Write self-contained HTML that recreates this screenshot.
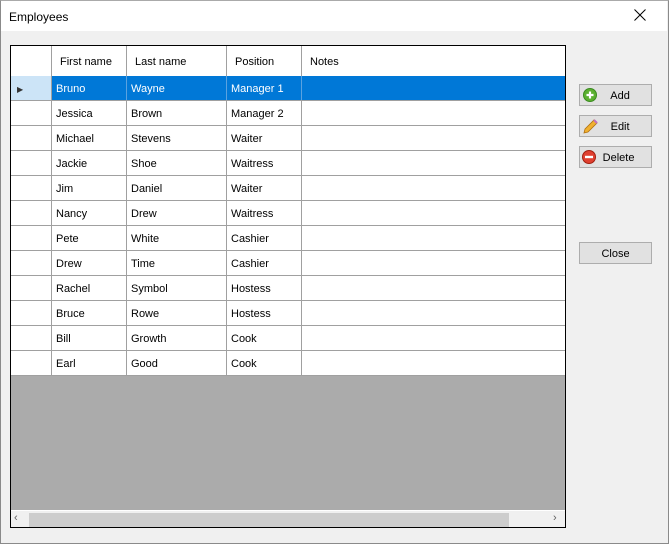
<!DOCTYPE html>
<html><head><style>
*{margin:0;padding:0;box-sizing:border-box}
body{width:669px;height:544px;background:#f0f0f0;font-family:"Liberation Sans",sans-serif;font-size:11px;color:#000;position:relative;overflow:hidden}
.win{position:absolute;left:0;top:0;width:669px;height:544px;border:1px solid #8a8a8a;border-top:1px solid #aaa}
.title{position:absolute;left:1px;top:1px;width:666px;height:30px;background:#fff}
.title span{position:absolute;left:8px;top:9px;font-size:12px}
.x{position:absolute;left:632px;top:7px}
.grid{position:absolute;left:10px;top:45px;width:556px;height:483px;border:1px solid #000;background:#ababab}
.row{position:absolute;left:0;width:554px;height:25px;border-bottom:1px solid #a0a0a0}
.c{position:absolute;top:0;height:24px;border-right:1px solid #a0a0a0;padding-left:4px;line-height:26px;white-space:nowrap}
.hd .c{height:30px;line-height:33px;padding-left:8px}
.sel .c{background:#0078d7;color:#fff;border-right-color:#5aa2e0}
.sb{position:absolute;left:0;top:464px;width:554px;height:17px;background:#f0f0f0;border-top:1px solid #fff}
.thumb{position:absolute;left:18px;top:2px;width:480px;height:14px;background:#cdcdcd}
.btn{position:absolute;left:579px;width:73px;height:22px;background:#e1e1e1;border:1px solid #adadad;text-align:center;line-height:22px;font-size:11px}
</style></head><body>
<div class="win"></div>
<div class="title"><span>Employees</span><svg class="x" width="14" height="14"><path d="M1.5 1.5l11 11M12.5 1.5l-11 11" stroke="#000" stroke-width="1"/></svg></div>
<div class="grid">
 <div class="row hd" style="top:0;height:31px;background:#fff">
  <div class="c" style="left:0;width:41px"></div>
  <div class="c" style="left:41px;width:75px">First name</div>
  <div class="c" style="left:116px;width:100px">Last name</div>
  <div class="c" style="left:216px;width:75px">Position</div>
  <div class="c" style="left:291px;width:263px;border-right:none">Notes</div>
 </div>
 <div id="rows"></div>
 <div class="sb"><div style="position:absolute;left:3px;top:1px;color:#606060;font-size:11px">‹</div><div class="thumb"></div><div style="position:absolute;left:542px;top:1px;color:#606060;font-size:11px">›</div></div>
</div>
<div class="btn" style="top:84px"><svg width="14" height="14" style="position:absolute;left:3px;top:3px"><circle cx="7" cy="7" r="6.5" fill="#5bb030" stroke="#3a8a20"/><path d="M7 3.5v7M3.5 7h7" stroke="#fff" stroke-width="2.2"/></svg>&nbsp;&nbsp;&nbsp;Add</div>
<div class="btn" style="top:115px"><svg width="16" height="16" style="position:absolute;left:2px;top:2px"><path d="M2 15l1-4 9-9 3 3-9 9z" fill="#f0b030" stroke="#b07010" stroke-width="0.8"/><path d="M12 2l3 3" stroke="#c070c0" stroke-width="2"/></svg>&nbsp;&nbsp;&nbsp;Edit</div>
<div class="btn" style="top:146px"><svg width="14" height="14" style="position:absolute;left:2px;top:3px"><circle cx="7" cy="7" r="6.5" fill="#e04030" stroke="#a02010"/><path d="M3 7h8" stroke="#fff" stroke-width="2.4"/></svg>&nbsp;&nbsp;Delete</div>
<div class="btn" style="top:242px">Close</div>
<script>
var d=[["Bruno","Wayne","Manager 1"],["Jessica","Brown","Manager 2"],["Michael","Stevens","Waiter"],["Jackie","Shoe","Waitress"],["Jim","Daniel","Waiter"],["Nancy","Drew","Waitress"],["Pete","White","Cashier"],["Drew","Time","Cashier"],["Rachel","Symbol","Hostess"],["Bruce","Rowe","Hostess"],["Bill","Growth","Cook"],["Earl","Good","Cook"]];
var h="";d.forEach(function(r,i){h+='<div class="row'+(i==0?' sel':'')+'" style="top:'+(30+i*25)+'px;background:#fff"><div class="c rh" style="left:0;width:41px;background:'+(i==0?'#cce4f7':'#fff')+';border-right-color:#a0a0a0">'+(i==0?'<span style="font-size:8px;color:#333;padding-left:2px">▶</span>':'')+'</div><div class="c" style="left:41px;width:75px">'+r[0]+'</div><div class="c" style="left:116px;width:100px">'+r[1]+'</div><div class="c" style="left:216px;width:75px">'+r[2]+'</div><div class="c" style="left:291px;width:263px;border-right:none"></div></div>'});
document.getElementById("rows").innerHTML=h;
</script>
</body></html>
